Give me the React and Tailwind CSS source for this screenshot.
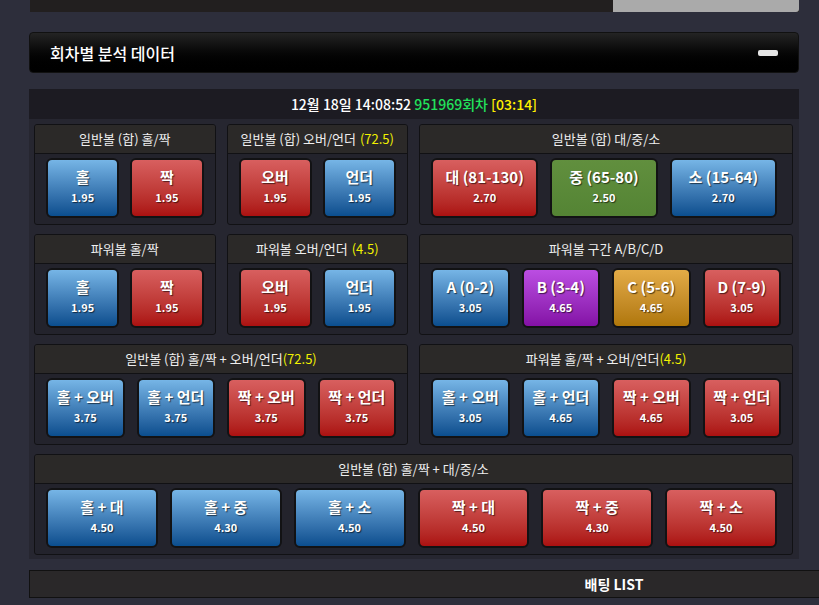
import React from "react";

const tone = {
  blue: "bg-gradient-to-b from-[#76b5e6] to-[#0a4e8e]",
  red: "bg-gradient-to-b from-[#d85f5f] to-[#ab1010]",
  green: "bg-gradient-to-b from-[#618f3e] to-[#548434]",
  purple: "bg-gradient-to-b from-[#bb4de2] to-[#8410a6]",
  gold: "bg-gradient-to-b from-[#e3ab46] to-[#b07708]",
};

function Pick({ label, odds, color }) {
  return (
    <button
      className={`h-[60px] rounded-[6px] border-2 border-[#121214] ${tone[color]} flex flex-col items-center pt-[7px] text-white [text-shadow:1px_1px_1px_rgba(0,0,0,0.6)]`}
    >
      <span className="text-[15px] font-bold leading-[20px] whitespace-nowrap">{label}</span>
      <span className="mt-[3px] text-[11px] font-bold leading-[14px]">{odds}</span>
    </button>
  );
}

function Panel({ title, accent, spaced, span, body, items }) {
  return (
    <div className={`${span} rounded-[3px] border border-[#111114] bg-[#23232c] overflow-hidden`}>
      <div className="h-[29px] border-b border-[#111114] bg-[#2b2928] flex items-center justify-center text-[13px] text-[#eeeeee]">
        <span>{title}</span>
        {accent && (
          <span className={`text-[#f2f200] ${spaced ? "ml-[4px]" : ""}`}>{accent}</span>
        )}
      </div>
      <div className={`grid pt-[4px] pb-[6px] ${body}`}>
        {items.map((it, i) => (
          <Pick key={i} {...it} />
        ))}
      </div>
    </div>
  );
}

const two = "grid-cols-2 px-[11px] gap-[11px]";
const three = "grid-cols-3 pl-[11px] pr-[15px] gap-[12px]";
const four = "grid-cols-4 px-[11px] gap-[12px]";
const six = "grid-cols-6 pl-[11px] pr-[15px] gap-[12px]";

const panels = [
  {
    title: "일반볼 (합) 홀/짝",
    span: "col-span-1",
    body: two,
    items: [
      { label: "홀", odds: "1.95", color: "blue" },
      { label: "짝", odds: "1.95", color: "red" },
    ],
  },
  {
    title: "일반볼 (합) 오버/언더",
    accent: "(72.5)",
    spaced: true,
    span: "col-span-1",
    body: two,
    items: [
      { label: "오버", odds: "1.95", color: "red" },
      { label: "언더", odds: "1.95", color: "blue" },
    ],
  },
  {
    title: "일반볼 (합) 대/중/소",
    span: "col-span-2",
    body: three,
    items: [
      { label: "대 (81-130)", odds: "2.70", color: "red" },
      { label: "중 (65-80)", odds: "2.50", color: "green" },
      { label: "소 (15-64)", odds: "2.70", color: "blue" },
    ],
  },
  {
    title: "파워볼 홀/짝",
    span: "col-span-1",
    body: two,
    items: [
      { label: "홀", odds: "1.95", color: "blue" },
      { label: "짝", odds: "1.95", color: "red" },
    ],
  },
  {
    title: "파워볼 오버/언더",
    accent: "(4.5)",
    spaced: true,
    span: "col-span-1",
    body: two,
    items: [
      { label: "오버", odds: "1.95", color: "red" },
      { label: "언더", odds: "1.95", color: "blue" },
    ],
  },
  {
    title: "파워볼 구간 A/B/C/D",
    span: "col-span-2",
    body: four,
    items: [
      { label: "A (0-2)", odds: "3.05", color: "blue" },
      { label: "B (3-4)", odds: "4.65", color: "purple" },
      { label: "C (5-6)", odds: "4.65", color: "gold" },
      { label: "D (7-9)", odds: "3.05", color: "red" },
    ],
  },
  {
    title: "일반볼 (합) 홀/짝 + 오버/언더",
    accent: "(72.5)",
    span: "col-span-2",
    body: four,
    items: [
      { label: "홀 + 오버", odds: "3.75", color: "blue" },
      { label: "홀 + 언더", odds: "3.75", color: "blue" },
      { label: "짝 + 오버", odds: "3.75", color: "red" },
      { label: "짝 + 언더", odds: "3.75", color: "red" },
    ],
  },
  {
    title: "파워볼 홀/짝 + 오버/언더",
    accent: "(4.5)",
    span: "col-span-2",
    body: four,
    items: [
      { label: "홀 + 오버", odds: "3.05", color: "blue" },
      { label: "홀 + 언더", odds: "4.65", color: "blue" },
      { label: "짝 + 오버", odds: "4.65", color: "red" },
      { label: "짝 + 언더", odds: "3.05", color: "red" },
    ],
  },
  {
    title: "일반볼 (합) 홀/짝 + 대/중/소",
    span: "col-span-4",
    body: six,
    items: [
      { label: "홀 + 대", odds: "4.50", color: "blue" },
      { label: "홀 + 중", odds: "4.30", color: "blue" },
      { label: "홀 + 소", odds: "4.50", color: "blue" },
      { label: "짝 + 대", odds: "4.50", color: "red" },
      { label: "짝 + 중", odds: "4.30", color: "red" },
      { label: "짝 + 소", odds: "4.50", color: "red" },
    ],
  },
];

export default function App() {
  return (
    <div className="h-[605px] w-[819px] overflow-hidden bg-[#2d2e3b] font-['Noto_Sans_CJK_KR','Noto_Sans',sans-serif]">
      {/* previous section's bottom edge */}
      <div className="ml-[30px] w-[769px] h-[12px] flex bg-[#221f1f]">
        <div className="flex-1" />
        <div className="w-[186px] bg-[#aaaaaa] rounded-br-[3px]" />
      </div>

      {/* section title bar */}
      <div className="mt-[20px] ml-[29px] w-[770px] h-[41px] rounded-[4px] border border-[#111] bg-gradient-to-b from-[#242424] to-[#000000] flex items-center justify-between pl-[20px] pr-[20px]">
        <span className="text-[16px] font-medium text-white leading-none">회차별 분석 데이터</span>
        <span className="w-[20px] h-[6px] rounded-[2px] bg-[#e6e6e6]" />
      </div>

      {/* analysis board */}
      <div className="mt-[16px] ml-[29px] w-[770px] bg-[#262630] pb-[4px]">
        <div className="h-[30px] bg-[#1c1b22] flex items-center justify-center text-[14px] font-medium">
          <span className="text-white">12월 18일 14:08:52&nbsp;</span>
          <span className="text-[#22e35c]">951969회차&nbsp;</span>
          <span className="text-[#fff000]">[03:14]</span>
        </div>
        <div className="grid grid-cols-4 gap-x-[11px] gap-y-[9px] pl-[5px] pr-[6px] pt-[5px]">
          {panels.map((p, i) => (
            <Panel key={i} {...p} />
          ))}
        </div>
      </div>

      {/* betting list header */}
      <div className="mt-[11px] ml-[29px] w-[1170px] h-[28px] bg-[#2a2829] border border-[#111] flex items-center justify-center">
        <span className="text-[14px] font-bold text-white">배팅 LIST</span>
      </div>
    </div>
  );
}
